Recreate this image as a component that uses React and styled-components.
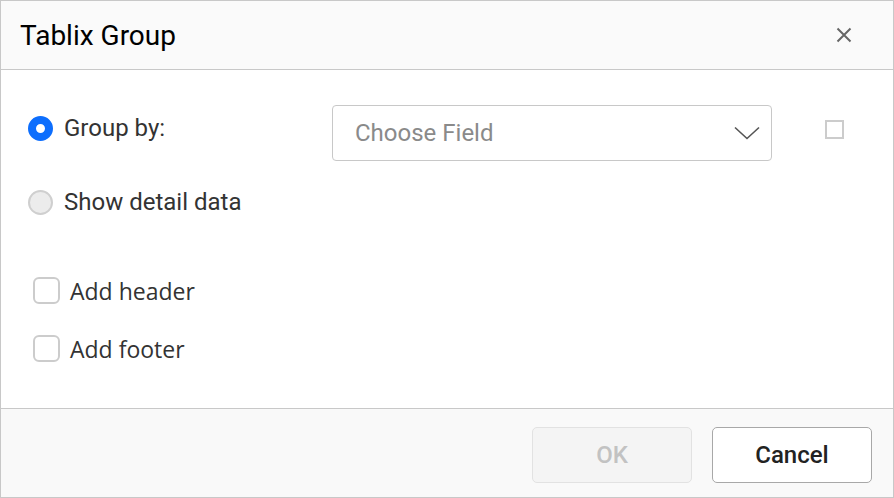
import React from 'react';
import styled, { createGlobalStyle } from 'styled-components';

const GlobalStyle = createGlobalStyle`
  html, body {
    margin: 0;
    padding: 0;
    background: #fff;
  }
  * {
    box-sizing: border-box;
  }
`;

const Dialog = styled.div`
  width: 894px;
  height: 498px;
  border: 1px solid #c8c8c8;
  display: flex;
  flex-direction: column;
  font-family: Roboto, 'Liberation Sans', sans-serif;
  color: #333;
  background: #fff;
`;

const Header = styled.div`
  height: 69px;
  flex-shrink: 0;
  background: #fafafa;
  border-bottom: 1px solid #c8c8c8;
  display: flex;
  align-items: center;
  justify-content: space-between;
  padding: 0 37px 0 19px;
`;

const Title = styled.h1`
  margin: 0;
  font-size: 28px;
  font-weight: 400;
  color: #000;
`;

const CloseButton = styled.button`
  border: none;
  background: transparent;
  padding: 0;
  width: 24px;
  height: 24px;
  display: flex;
  align-items: center;
  justify-content: center;
  cursor: pointer;
`;

const Body = styled.div`
  flex: 1;
  padding: 35px 0 0 27px;
  display: flex;
  flex-direction: column;
`;

const FieldRow = styled.div`
  display: flex;
  align-items: flex-start;
`;

const LeftCol = styled.div`
  width: 304px;
  padding-top: 11px;
`;

const OptionRow = styled.label`
  display: flex;
  align-items: center;
  gap: ${(p) => p.$gap || 11}px;
  margin-top: ${(p) => p.$top || 0}px;
  margin-left: ${(p) => p.$left || 0}px;
  height: ${(p) => p.$height || 24}px;
  font-family: ${(p) => (p.$open ? "'Open Sans', Roboto, sans-serif" : "Roboto, 'Liberation Sans', sans-serif")};
  font-size: ${(p) => (p.$open ? 23 : 24)}px;
  color: #333;
  cursor: pointer;
`;

const Radio = styled.span`
  width: 25px;
  height: 25px;
  border-radius: 50%;
  flex-shrink: 0;
  background: ${(p) => (p.$checked ? '#fff' : '#ececec')};
  border: ${(p) => (p.$checked ? '8px solid #0d6efd' : '2px solid #cfcfcf')};
`;

const Check = styled.span`
  width: 27px;
  height: 27px;
  border: 2px solid #cccccc;
  border-radius: 6px;
  background: #fff;
  flex-shrink: 0;
`;

const Select = styled.div`
  width: 440px;
  height: 56px;
  border: 1px solid #c8c8c8;
  border-radius: 4px;
  display: flex;
  align-items: center;
  justify-content: space-between;
  padding: 0 11px 0 22px;
  font-size: 24px;
  color: #8a8a8a;
`;

const SmallCheck = styled.span`
  width: 19px;
  height: 19px;
  border: 2px solid #cccccc;
  margin: 15px 0 0 53px;
`;

const Footer = styled.div`
  height: 89px;
  flex-shrink: 0;
  background: #f9f9f9;
  border-top: 1px solid #c8c8c8;
  display: flex;
  align-items: center;
  justify-content: flex-end;
  gap: 20px;
  padding: 4px 21px 0 0;
`;

const Button = styled.button`
  width: 160px;
  height: 56px;
  border-radius: 5px;
  font-family: Roboto, 'Liberation Sans', sans-serif;
  font-size: 24px;
  font-weight: 500;
  border: 1px solid ${(p) => (p.$disabled ? '#e2e2e2' : '#a8a8a8')};
  background: ${(p) => (p.$disabled ? '#f4f4f4' : '#fff')};
  color: ${(p) => (p.$disabled ? '#c2c2c2' : '#222')};
  cursor: ${(p) => (p.$disabled ? 'default' : 'pointer')};
`;

export default function App() {
  return (
    <>
      <GlobalStyle />
      <Dialog>
        <Header>
          <Title>Tablix Group</Title>
          <CloseButton aria-label="Close">
            <svg width="16" height="16" viewBox="0 0 16 16">
              <path d="M1.5 1.5 L14.5 14.5 M14.5 1.5 L1.5 14.5" stroke="#666" strokeWidth="2" />
            </svg>
          </CloseButton>
        </Header>
        <Body>
          <FieldRow>
            <LeftCol>
              <OptionRow $gap={11}>
                <Radio $checked />
                Group by:
              </OptionRow>
            </LeftCol>
            <Select>
              Choose Field
              <svg width="26" height="14" viewBox="0 0 26 14">
                <path d="M1 1.5 L13 12.5 L25 1.5" fill="none" stroke="#555" strokeWidth="1.6" />
              </svg>
            </Select>
            <SmallCheck />
          </FieldRow>
          <OptionRow $top={29} $gap={11}>
            <Radio />
            Show detail data
          </OptionRow>
          <OptionRow $top={63} $left={5} $height={27} $gap={10} $open>
            <Check />
            Add header
          </OptionRow>
          <OptionRow $top={31} $left={5} $height={27} $gap={10} $open>
            <Check />
            Add footer
          </OptionRow>
        </Body>
        <Footer>
          <Button $disabled>OK</Button>
          <Button>Cancel</Button>
        </Footer>
      </Dialog>
    </>
  );
}
